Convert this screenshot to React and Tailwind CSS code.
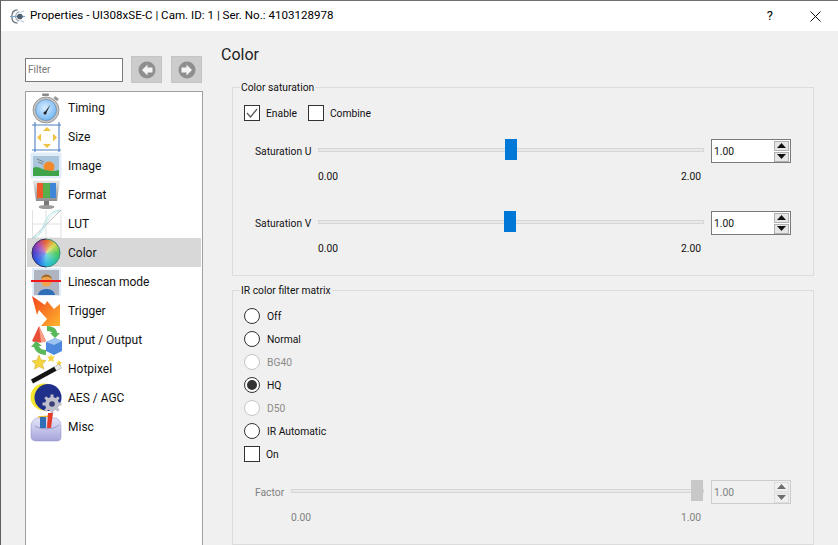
import React from 'react';

const TimingIcon = () => (
  <svg viewBox="0 0 32 32" className="w-8 h-8">
    <defs>
      <radialGradient id="tg" cx="0.45" cy="0.4" r="0.7">
        <stop offset="0" stopColor="#d8edfe" />
        <stop offset="1" stopColor="#62aef2" />
      </radialGradient>
    </defs>
    <rect x="12" y="1.5" width="7" height="2.5" rx="1" fill="#8a8a8a" />
    <rect x="24" y="5" width="5" height="3" rx="1" fill="#9a9a9a" transform="rotate(35 26 6)" />
    <circle cx="16" cy="18" r="13" fill="#c4c4c4" stroke="#8b8b8b" strokeWidth="0.8" />
    <circle cx="16" cy="18" r="10.5" fill="url(#tg)" stroke="#5f7f9e" strokeWidth="0.6" />
    <path d="M14.5 20.5 L20.5 12.5 L16 21.5 Z" fill="#222" />
    <circle cx="15" cy="21" r="1.5" fill="#222" />
  </svg>
);

const SizeIcon = () => (
  <svg viewBox="0 0 32 32" className="w-8 h-8">
    <path d="M2 4 H31 M2 29 H31 M5 1 V31 M29 1 V31" stroke="#4d7fc4" strokeWidth="1.1" fill="none" />
    <path d="M17 6 L21 10 H13 Z M17 27 L21 23 H13 Z" fill="#f0c344" />
    <path d="M7 16.5 L11 12.5 V20.5 Z M27 16.5 L23 12.5 V20.5 Z" fill="#f0c344" />
  </svg>
);

const ImageIcon = () => (
  <svg viewBox="0 0 32 32" className="w-8 h-8">
    <rect x="0.5" y="2.5" width="31" height="26" rx="2" fill="#e0ecf8" />
    <rect x="3" y="6" width="26" height="20" fill="#a9c6dc" />
    <circle cx="19" cy="17" r="5.5" fill="#f08a2c" />
    <path d="M3 18 C9 14 14 24 29 20 V26 H3 Z" fill="#3fa34a" />
    <path d="M7 9 L14 12 M8 12 L13 14" stroke="#666" strokeWidth="0.7" />
  </svg>
);

const FormatIcon = () => (
  <svg viewBox="0 0 32 32" className="w-8 h-8">
    <defs>
      <linearGradient id="fg" x1="0" y1="0" x2="0" y2="1">
        <stop offset="0" stopColor="#e8e8e8" />
        <stop offset="1" stopColor="#8d8d8d" />
      </linearGradient>
    </defs>
    <path d="M3 1.5 H30 L27 22 H6 Z" fill="url(#fg)" />
    <rect x="7" y="4" width="6" height="15" fill="#ee5a2a" />
    <rect x="13" y="4" width="7" height="15" fill="#57b04a" />
    <rect x="20" y="4" width="6" height="15" fill="#3f87d6" />
    <rect x="14" y="22" width="5" height="5" fill="#777" />
    <ellipse cx="16.5" cy="28" rx="8" ry="2" fill="#9a9a9a" />
  </svg>
);

const LutIcon = () => (
  <svg viewBox="0 0 32 32" className="w-8 h-8">
    <path d="M2.5 2 V30 H31 M16 2 V30 M2.5 16 H31 M31 2 V30" stroke="#d4d4d4" strokeWidth="0.7" fill="none" />
    <path d="M2.5 30 L31 2" stroke="#a8a8a8" strokeWidth="0.7" fill="none" />
    <path d="M3 30 C16 27 11 4 30 2" stroke="#a5e0e2" strokeWidth="0.9" fill="none" />
    <path d="M3 30 C20 24 12 8 30 3" stroke="#a5e0e2" strokeWidth="0.6" fill="none" />
  </svg>
);

const ColorIcon = () => (
  <svg viewBox="0 0 32 32" className="w-8 h-8">
    <foreignObject x="2" y="2" width="28" height="28">
      <div className="relative w-7 h-7 rounded-full bg-[conic-gradient(#e8602e,#d8d84a,#4ac85a,#2cc4a8,#2cb8e0,#2a5ee8,#4a3fc8,#a23fb0,#e8602e)]">
        <div className="absolute inset-0 rounded-full bg-[radial-gradient(circle,rgba(255,255,255,0.45),transparent_60%)]" />
      </div>
    </foreignObject>
    <path d="M16 30 A14 14 0 0 1 16 2" fill="none" stroke="#2a2a60" strokeWidth="1" />
    <path d="M16 2 A14 14 0 0 1 16 30" fill="none" stroke="#3a8a80" strokeWidth="1" />
  </svg>
);

const LinescanIcon = () => (
  <svg viewBox="0 0 32 32" className="w-8 h-8">
    <rect x="2" y="2" width="29" height="28" fill="#e0ecf8" />
    <rect x="4" y="4" width="25" height="25" fill="#b0b4c0" />
    <path d="M8 29 C9 21 24 21 25 29 Z" fill="#2f6fb8" />
    <circle cx="16.5" cy="15" r="5.5" fill="#efa34e" />
    <path d="M11 13 C12 7 21 7 22 13 C19 10 14 10 11 13 Z" fill="#a06a28" />
    <rect x="1" y="14" width="30" height="2" fill="#f01818" />
  </svg>
);

const TriggerIcon = () => (
  <svg viewBox="0 0 32 32" className="w-8 h-8">
    <defs>
      <linearGradient id="trg" x1="0" y1="0" x2="1" y2="1">
        <stop offset="0" stopColor="#f4421a" />
        <stop offset="1" stopColor="#fdb62f" />
      </linearGradient>
    </defs>
    <path d="M2 1 L15 10 L17 6 L24 14 L30 9 V31 H11 L17 24 L9 15 L7 20 Z" fill="url(#trg)" />
  </svg>
);

const InputOutputIcon = () => (
  <svg viewBox="0 0 32 32" className="w-8 h-8">
    <path d="M2 17 L9 2 L16 17 C12 19 6 19 2 17 Z" fill="#e8503a" />
    <path d="M9 2 L16 17 C14 18 12 18 11 18 Z" fill="#f8a088" />
    <path d="M17 2 C23 2 27 5 27 9 H30 L25 14 L20 9 H22 C22 8 20 7 17 7 Z" fill="#58b85a" />
    <path d="M16 31 C9 31 5 27 4 23 H1 L6 17 L12 22 H9 C10 25 13 26 16 26 Z" fill="#58b85a" />
    <path d="M16 18 L25 14 L32 17 V27 L24 31 L16 27 Z" fill="#4d8ade" />
    <path d="M16 18 L24 21 L32 17 L25 14 Z" fill="#9cc4f2" />
  </svg>
);

const HotpixelIcon = () => (
  <svg viewBox="0 0 32 32" className="w-8 h-8">
    <path d="M9 2 L11 7 L16 7.5 L12.5 11 L14 16 L9 13.5 L4.5 16 L5.5 11 L2 8 L7 7 Z" fill="#f5d53f" stroke="#c9a52b" strokeWidth="0.5" />
    <path d="M21 1 L22 3.5 L25 3.5 L23 6 L24 9 L21 7.5 L18 9 L19 6 L17 3.5 L20 3.5 Z" fill="#f5d53f" />
    <path d="M29 7 L30 9 L32 9.5 L30.5 11 L31 13 L29 12 L27 13 L27.5 11 L26 9.5 L28 9 Z" fill="#f5d53f" />
    <path d="M1 26.5 L29 11 L31.5 15 L3 30.5 Z" fill="#151515" />
    <path d="M24 13.8 L29 11 L31.5 15 L26.5 17.8 Z" fill="#e8e8e8" />
  </svg>
);

const AesIcon = () => (
  <svg viewBox="0 0 32 32" className="w-8 h-8">
    <circle cx="14" cy="15" r="13.5" fill="#f2e52c" />
    <circle cx="18" cy="15.5" r="13.5" fill="#1f2f8a" />
    <g transform="translate(22 22)">
      <circle r="7" fill="#c0c0cc" />
      <path d="M0 -9.5 V9.5 M-9.5 0 H9.5 M-6.7 -6.7 L6.7 6.7 M-6.7 6.7 L6.7 -6.7" stroke="#c0c0cc" strokeWidth="3" />
      <circle r="2.8" fill="#3a3f78" />
    </g>
  </svg>
);

const MiscIcon = () => (
  <svg viewBox="0 0 32 32" className="w-8 h-8">
    <defs>
      <linearGradient id="mg" x1="0" y1="0" x2="0" y2="1">
        <stop offset="0" stopColor="#e4e4fa" />
        <stop offset="1" stopColor="#a4a4da" />
      </linearGradient>
    </defs>
    <path d="M1 16 C1 10 5 7 8 7 H26 C29 8 31 11 31 15 V26 C31 29 29 30 27 30 H7 C3 30 1 29 1 25 Z" fill="url(#mg)" stroke="#8c8cc0" strokeWidth="0.5" />
    <path d="M8 6 L22 5" stroke="#e8b830" strokeWidth="1.6" />
    <path d="M18 2 H23 L21 17 H17 Z" fill="#e33d2a" />
    <path d="M10 6 H16 V17 H10 Z" fill="#2f6fb8" />
    <path d="M5 15 C10 19 24 19 29 14" stroke="#8c8cc0" strokeWidth="0.8" fill="none" />
  </svg>
);

const items = [
  { label: 'Timing', icon: TimingIcon },
  { label: 'Size', icon: SizeIcon },
  { label: 'Image', icon: ImageIcon },
  { label: 'Format', icon: FormatIcon },
  { label: 'LUT', icon: LutIcon },
  { label: 'Color', icon: ColorIcon, active: true },
  { label: 'Linescan mode', icon: LinescanIcon },
  { label: 'Trigger', icon: TriggerIcon },
  { label: 'Input / Output', icon: InputOutputIcon },
  { label: 'Hotpixel', icon: HotpixelIcon },
  { label: 'AES / AGC', icon: AesIcon },
  { label: 'Misc', icon: MiscIcon },
];

const NavButton = ({ dir }) => (
  <button className="w-[31px] h-[27px] bg-[#cccccc] border border-[#c4c4c4] flex items-center justify-center">
    <svg viewBox="0 0 18 18" className="w-[18px] h-[18px]">
      <circle cx="9" cy="9" r="8.5" fill="#8e8e8e" />
      <path
        d={dir === 'left' ? 'M9.5 3.5 L4 9 L9.5 14.5 V11.5 H14.5 V6.5 H9.5 Z' : 'M8.5 3.5 L14 9 L8.5 14.5 V11.5 H3.5 V6.5 H8.5 Z'}
        fill="#f4f4f4"
      />
    </svg>
  </button>
);

const Checkbox = ({ checked }) => (
  <span className="w-4 h-4 shrink-0 bg-white border border-[#333333] flex items-center justify-center">
    {checked && (
      <svg viewBox="0 0 14 14" className="w-[14px] h-[14px]">
        <path d="M2 7 L5.5 11 L12 3" stroke="#555555" strokeWidth="1.2" fill="none" />
      </svg>
    )}
  </span>
);

const Radio = ({ label, checked, disabled }) => (
  <div className={`flex items-center h-4 gap-[7px] ${disabled ? 'text-[#8c8c8c]' : 'text-[#111111]'}`}>
    <span className={`w-4 h-4 rounded-full bg-white border flex items-center justify-center ${disabled ? 'border-[#c4c4c4]' : 'border-[#333333]'}`}>
      {checked && <span className="w-[10px] h-[10px] rounded-full bg-[#333333]" />}
    </span>
    <span className="translate-y-px">{label}</span>
  </div>
);

const Slider = ({ width, thumb, disabled }) => (
  <div className={`relative h-[21px] flex items-center ${width}`}>
    <div className="w-full h-1 bg-[#e7eaea] border border-[#d6d6d6]" />
    <div className={`absolute top-0 w-3 h-[21px] ${thumb} ${disabled ? 'bg-[#c8c8c8]' : 'bg-[#0078d7]'}`} />
  </div>
);

const Arrow = ({ up, disabled }) => (
  <span className={`h-[10px] w-[15px] flex items-center justify-center border ${disabled ? 'border-[#dcdcdc]' : 'border-[#b0b0b0] bg-[#e6e6e6]'}`}>
    <svg viewBox="0 0 9 5" className="w-[9px] h-[5px]">
      <path d={up ? 'M4.5 0 L9 5 H0 Z' : 'M4.5 5 L9 0 H0 Z'} fill={disabled ? '#6e6e6e' : '#111111'} />
    </svg>
  </span>
);

const Spin = ({ disabled }) => (
  <div className={`w-20 h-6 border flex items-center justify-between pl-[2px] pr-[1px] ${disabled ? 'border-[#cccccc] text-[#808080]' : 'border-[#7a7a7a] bg-white text-[#111111]'}`}>
    <span className="translate-y-px">1.00</span>
    <span className="flex flex-col gap-[1px]">
      <Arrow up disabled={disabled} />
      <Arrow disabled={disabled} />
    </span>
  </div>
);

const SliderBlock = ({ label, thumb, className }) => (
  <div className={className}>
    <div className="flex items-start pl-[22px]">
      <span className="w-[63px] leading-6 translate-y-px">{label}</span>
      <Slider width="w-[386px]" thumb={thumb} />
      <span className="ml-[7px]"><Spin /></span>
    </div>
    <div className="flex justify-between w-[383px] ml-[85px] mt-[6px] leading-[14px] translate-y-px">
      <span>0.00</span>
      <span>2.00</span>
    </div>
  </div>
);

export default function App() {
  return (
    <div className="w-[838px] h-[545px] overflow-hidden flex flex-col bg-[#f0f0f0] border-l border-[#5f5f5f] text-[10.3px] text-[#111111] font-['Roboto',sans-serif]">
      <div className="h-[31px] shrink-0 bg-white border-t border-[#707070] flex items-center pl-[8px] text-[11.6px] text-black">
        <svg viewBox="0 0 18 18" className="w-[17px] h-[17px]">
          <path d="M9 2 C5 2 3 5 3 9 C3 13 5 16 9 16" stroke="#6a7680" strokeWidth="1.4" fill="none" />
          <path d="M11 4 C8 5 7 7 7 9 C7 11 8 13 11 14" stroke="#9aa4ac" strokeWidth="1.2" fill="none" />
          <path d="M1 9 H17" stroke="#7da6c4" strokeWidth="1.2" />
          <circle cx="11.5" cy="9" r="3" fill="#4f6070" />
          <path d="M12 5 L16 3 M12 13 L16 15" stroke="#a8c4d8" strokeWidth="1" />
        </svg>
        <span className="ml-[4px]">Properties - UI308xSE-C | Cam. ID: 1 | Ser. No.: 4103128978</span>
        <span className="ml-auto mr-[37px] text-[13px]">?</span>
        <svg viewBox="0 0 11 11" className="w-[11px] h-[11px] mr-[17px]">
          <path d="M0.5 0.5 L10.5 10.5 M10.5 0.5 L0.5 10.5" stroke="#111111" strokeWidth="1" />
        </svg>
      </div>

      <div className="flex flex-1 min-h-0">
        <div className="w-[202px] shrink-0 pl-[24px] pt-[25px] flex flex-col">
          <div className="flex items-center h-[27px]">
            <input
              placeholder="Filter"
              className="w-[98px] h-6 bg-white border border-[#7a7a7a] px-[2px] text-[10px] outline-none placeholder:text-[#777777]"
            />
            <span className="ml-2"><NavButton dir="left" /></span>
            <span className="ml-[9px]"><NavButton dir="right" /></span>
          </div>
          <div className="mt-2 flex-1 w-[178px] bg-white border border-[#a0a0a0] border-b-0 p-px pb-0">
            {items.map(({ label, icon: Icon, active }) => (
              <div key={label} className={`h-[29px] flex items-center text-xs ${active ? 'bg-[#d8d8d8]' : ''}`}>
                <span className="ml-[3px] w-8 h-8 shrink-0"><Icon /></span>
                <span className="ml-[6px]">{label}</span>
              </div>
            ))}
          </div>
        </div>

        <div className="w-[593px] ml-[18px] pt-[11px] flex flex-col">
          <h1 className="text-base leading-6 h-[38px] text-[#222222] translate-y-px">Color</h1>
          <div className="ml-[11px] w-[582px] flex flex-col gap-[7px] flex-1 min-h-0">
            <fieldset className="h-[196px] border border-[#dcdcdc]">
              <legend className="ml-[7px] px-px h-[14px] pt-px leading-[14px]">Color saturation</legend>
              <div className="flex items-center pl-[11px] pt-[11px]">
                <Checkbox checked />
                <span className="ml-[6px] translate-y-px">Enable</span>
                <span className="ml-[11px]"><Checkbox /></span>
                <span className="ml-[6px] translate-y-px">Combine</span>
              </div>
              <SliderBlock label="Saturation U" thumb="left-[187px]" className="mt-[18px]" />
              <SliderBlock label="Saturation V" thumb="left-[186px]" className="mt-[28px]" />
            </fieldset>

            <fieldset className="flex-1 min-h-0 border border-[#dcdcdc]">
              <legend className="ml-[7px] px-px h-[14px] pt-px leading-[14px]">IR color filter matrix</legend>
              <div className="flex flex-col gap-[7px] pl-[11px] pt-[11px]">
                <Radio label="Off" />
                <Radio label="Normal" />
                <Radio label="BG40" disabled />
                <Radio label="HQ" checked />
                <Radio label="D50" disabled />
                <Radio label="IR Automatic" />
                <div className="flex items-center gap-[6px] h-4">
                  <Checkbox />
                  <span className="translate-y-px">On</span>
                </div>
              </div>
              <div className="flex items-start pl-[22px] mt-[18px] text-[#808080]">
                <span className="w-[36px] leading-6 translate-y-px">Factor</span>
                <Slider width="w-[413px]" thumb="left-[400px]" disabled />
                <span className="ml-[7px]"><Spin disabled /></span>
              </div>
              <div className="flex justify-between w-[410px] ml-[58px] mt-[6px] leading-[14px] text-[#808080] translate-y-px">
                <span>0.00</span>
                <span>1.00</span>
              </div>
            </fieldset>
          </div>
        </div>
      </div>
    </div>
  );
}
